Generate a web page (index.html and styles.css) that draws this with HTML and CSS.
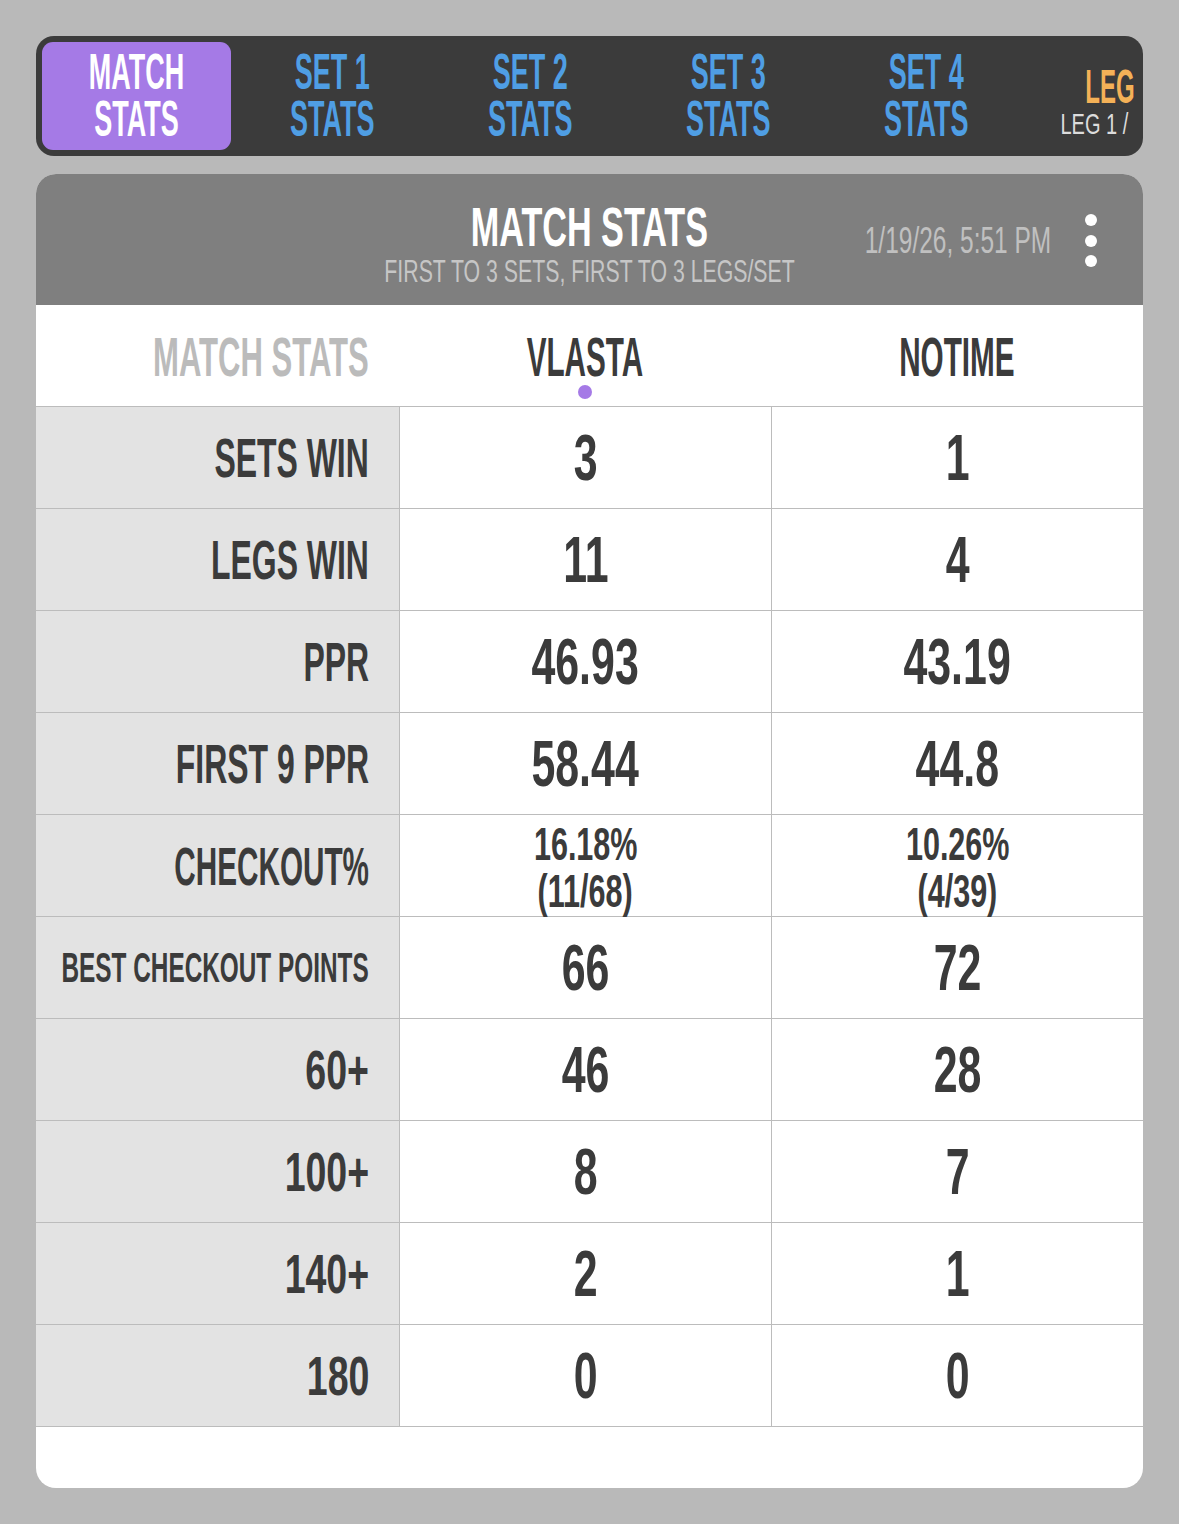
FILE: index.html
```html
<!DOCTYPE html>
<html>
<head>
<meta charset="utf-8">
<link rel="stylesheet" href="styles.css">
</head>
<body>
<div class="page">
  <nav class="tabs">
    <div class="tab active"><div class="tab-text"><div>MATCH</div><div>STATS</div></div></div>
    <div class="tab"><div class="tab-text"><div>SET 1</div><div>STATS</div></div></div>
    <div class="tab"><div class="tab-text"><div>SET 2</div><div>STATS</div></div></div>
    <div class="tab"><div class="tab-text"><div>SET 3</div><div>STATS</div></div></div>
    <div class="tab"><div class="tab-text"><div>SET 4</div><div>STATS</div></div></div>
    <div class="tab leg">
      <div class="leg-title"><span>LEG</span></div>
      <div class="leg-sub"><span>LEG 1 /</span></div>
    </div>
  </nav>

  <section class="card">
    <header class="card-head">
      <div class="head-center">
        <div class="title"><span>MATCH STATS</span></div>
        <div class="subtitle"><span>FIRST TO 3 SETS, FIRST TO 3 LEGS/SET</span></div>
      </div>
      <div class="head-right">
        <div class="date"><span>1/19/26, 5:51 PM</span></div>
        <div class="menu"><i></i><i></i><i></i></div>
      </div>
    </header>

    <div class="table">
      <div class="th th-label"><span>MATCH STATS</span></div>
      <div class="th th-player"><span>VLASTA</span><b class="turn"></b></div>
      <div class="th th-player"><span>NOTIME</span></div>

      <div class="lab"><span>SETS WIN</span></div>
      <div class="val"><span>3</span></div>
      <div class="val"><span>1</span></div>

      <div class="lab"><span>LEGS WIN</span></div>
      <div class="val"><span>11</span></div>
      <div class="val"><span>4</span></div>

      <div class="lab"><span>PPR</span></div>
      <div class="val"><span>46.93</span></div>
      <div class="val"><span>43.19</span></div>

      <div class="lab"><span>FIRST 9 PPR</span></div>
      <div class="val"><span>58.44</span></div>
      <div class="val"><span>44.8</span></div>

      <div class="lab lab-co"><span>CHECKOUT%</span></div>
      <div class="val val-2"><div class="pair"><span>16.18%</span><span>(11/68)</span></div></div>
      <div class="val val-2"><div class="pair"><span>10.26%</span><span>(4/39)</span></div></div>

      <div class="lab lab-small"><span>BEST CHECKOUT POINTS</span></div>
      <div class="val"><span>66</span></div>
      <div class="val"><span>72</span></div>

      <div class="lab lab-num"><span>60+</span></div>
      <div class="val"><span>46</span></div>
      <div class="val"><span>28</span></div>

      <div class="lab lab-num"><span>100+</span></div>
      <div class="val"><span>8</span></div>
      <div class="val"><span>7</span></div>

      <div class="lab lab-num"><span>140+</span></div>
      <div class="val"><span>2</span></div>
      <div class="val"><span>1</span></div>

      <div class="lab lab-num"><span>180</span></div>
      <div class="val"><span>0</span></div>
      <div class="val"><span>0</span></div>
    </div>
  </section>
</div>
</body>
</html>
```

FILE: styles.css
```css
* { box-sizing: border-box; }

html, body {
  margin: 0;
  padding: 0;
  background: #b9b9b9;
  font-family: "Liberation Sans", Arial, sans-serif;
  color: #3b3b3b;
}

.page {
  padding: 36px;
  width: 1179px;
}

/* ---------- tabs ---------- */
.tabs {
  height: 120px;
  background: #3b3b3b;
  border-radius: 18px;
  padding: 6px;
  display: flex;
  overflow: hidden;
}

.tab {
  flex: 0 0 198px;
  display: flex;
  align-items: center;
  justify-content: center;
}

.tab.active {
  flex: 0 0 189px;
  margin-right: 2px;
  background: #a57ae6;
  border-radius: 11px;
}

.tab-text {
  font-size: 50px;
  line-height: 47px;
  font-weight: 700;
  color: #4f9ee4;
  text-align: center;
  transform: scaleX(0.54);
  white-space: nowrap;
}

.tab.active .tab-text { color: #ffffff; }

.tab.leg {
  flex: 1 1 auto;
  flex-direction: column;
  align-items: flex-end;
  justify-content: flex-end;
  padding-bottom: 11px;
  padding-right: 2px;
}

.leg-title span,
.leg-sub span {
  display: inline-block;
  white-space: nowrap;
  transform-origin: right center;
}

.leg-title {
  font-size: 48px;
  line-height: 44px;
  font-weight: 700;
  color: #f4b157;
}
.leg-title span { transform: scaleX(0.5); }

.leg-sub {
  font-size: 29px;
  line-height: 30px;
  color: #dcdcdc;
  padding-right: 7px;
}
.leg-sub span { transform: scaleX(0.69); }

/* ---------- card ---------- */
.card {
  margin-top: 18px;
  background: #ffffff;
  border-radius: 20px;
  overflow: hidden;
  padding-bottom: 61px;
}

.card-head {
  height: 131px;
  background: #7f7f7f;
  display: grid;
  grid-template-columns: 100%;
  grid-template-rows: 100%;
}

.head-center,
.head-right {
  grid-area: 1 / 1;
}

.head-center {
  justify-self: center;
  padding-top: 28px;
  display: flex;
  flex-direction: column;
  align-items: center;
  white-space: nowrap;
}

.title {
  font-size: 56px;
  line-height: 50px;
  font-weight: 700;
  color: #ffffff;
}
.title span { display: inline-block; transform: scaleX(0.61); }

.subtitle {
  font-size: 32px;
  line-height: 38px;
  color: #c6c6c6;
}
.subtitle span { display: inline-block; transform: scaleX(0.665); }

.head-right {
  justify-self: end;
  display: flex;
  align-items: center;
  padding-right: 46px;
  padding-top: 2px;
}

.date {
  font-size: 36px;
  line-height: 40px;
  color: #c0c0c0;
  white-space: nowrap;
  margin-right: 34px;
}
.date span { display: inline-block; transform: scaleX(0.68); transform-origin: right center; }

.menu {
  display: flex;
  flex-direction: column;
  gap: 8.5px;
}
.menu i {
  display: block;
  width: 12px;
  height: 12px;
  border-radius: 50%;
  background: #ffffff;
}

/* ---------- table ---------- */
.table {
  display: grid;
  grid-template-columns: 363px 372px 1fr;
  grid-auto-rows: 102px;
}

.table > div {
  border-bottom: 1px solid #bcbcbc;
  white-space: nowrap;
}

.th {
  background: #ffffff;
  font-size: 56px;
  line-height: 56px;
  font-weight: 700;
  padding-top: 24px;
}
.th span { display: inline-block; transform: scaleX(0.53); }

.th-label {
  display: flex;
  justify-content: flex-end;
  align-items: flex-start;
  padding-right: 30px;
  color: #bbbbbb;
}
.th-label span { transform: scaleX(0.555); transform-origin: right center; }

.th-player {
  display: flex;
  flex-direction: column;
  align-items: center;
  color: #3b3b3b;
}

.turn {
  display: block;
  width: 14px;
  height: 14px;
  border-radius: 50%;
  background: #a57ae6;
}

.lab {
  background: #e3e3e3;
  display: flex;
  align-items: center;
  justify-content: flex-end;
  padding-right: 30px;
  font-size: 56px;
  line-height: 56px;
  font-weight: 700;
  color: #3b3b3b;
}
.lab span { display: inline-block; transform: scaleX(0.57); transform-origin: right center; }

.lab-num span { transform: scaleX(0.67); }

.lab-co { font-size: 54px; }
.lab-co span { transform: scaleX(0.55); }

.lab-small { font-size: 42px; }
.lab-small span { transform: scaleX(0.58); }

.val {
  border-left: 1px solid #bcbcbc;
  display: flex;
  align-items: center;
  justify-content: center;
  font-size: 64px;
  line-height: 64px;
  font-weight: 700;
  color: #3b3b3b;
  text-align: center;
}
.val span { display: inline-block; transform: scaleX(0.67); }

.val-2 {
  font-size: 47px;
  line-height: 47px;
  padding-top: 2px;
}

.pair {
  display: flex;
  flex-direction: column;
  align-items: center;
}
.pair span { transform: scaleX(0.65); }
```
